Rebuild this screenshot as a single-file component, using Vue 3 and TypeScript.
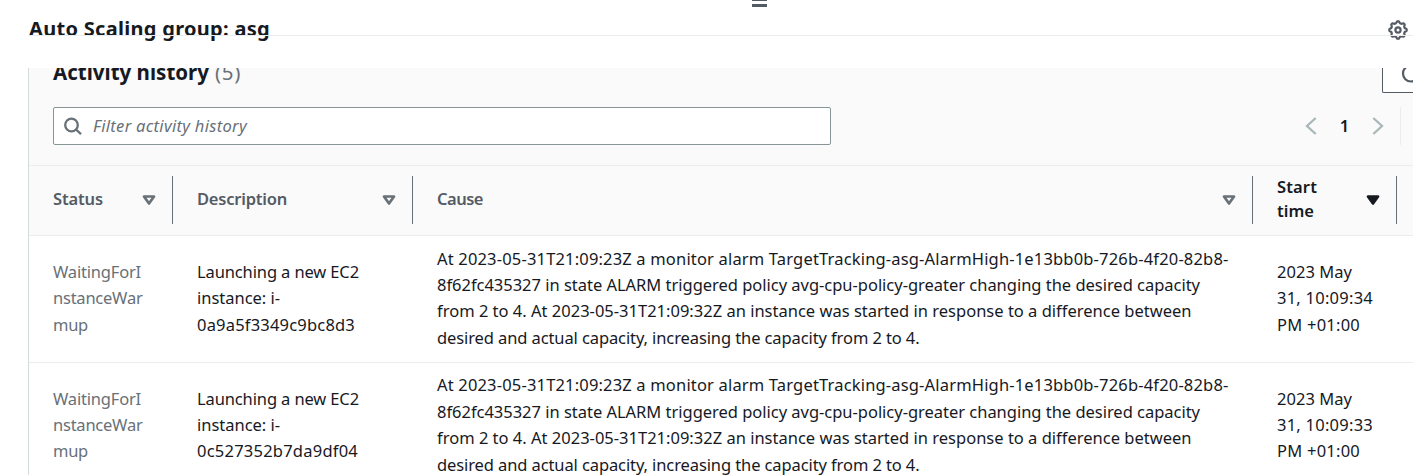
<script setup lang="ts">
import { type Directive } from 'vue'

type Line = [text: string, width: number]
interface Activity { status: Line[]; description: Line[]; cause: Line[]; start: Line[] }

// Spreads a line's letters so that it takes exactly the given width.
const vFit: Directive<HTMLElement, number> = {
  mounted(el, { value }) {
    const natural = el.getBoundingClientRect().width
    const count = el.textContent?.length ?? 1
    el.style.letterSpacing = `${(value - natural) / count}px`
  },
}

const status: Line[] = [['WaitingForI', 88], ['nstanceWar', 89.5], ['mup', 35]]
const cause: Line[] = [
  ['At 2023-05-31T21:09:23Z a monitor alarm TargetTracking-asg-AlarmHigh-1e13bb0b-726b-4f20-82b8-', 791.5],
  ['8f62fc435327 in state ALARM triggered policy avg-cpu-policy-greater changing the desired capacity', 763],
  ['from 2 to 4. At 2023-05-31T21:09:32Z an instance was started in response to a difference between', 754.5],
  ['desired and actual capacity, increasing the capacity from 2 to 4.', 482.5],
]
const activities: Activity[] = [
  {
    status, cause,
    description: [['Launching a new EC2', 162], ['instance: i-', 83], ['0a9a5f3349c9bc8d3', 158]],
    start: [['2023 May', 75], ['31, 10:09:34', 96], ['PM +01:00', 83]],
  },
  {
    status, cause,
    description: [['Launching a new EC2', 162], ['instance: i-', 83], ['0c527352b7da9df04', 161]],
    start: [['2023 May', 75], ['31, 10:09:33', 96], ['PM +01:00', 83]],
  },
]
const columns: { key: keyof Activity; lines: Line[]; sorted?: boolean }[] = [
  { key: 'status', lines: [['Status', 50]] },
  { key: 'description', lines: [['Description', 90]] },
  { key: 'cause', lines: [['Cause', 46]] },
  { key: 'start', lines: [['Start', 40], ['time', 37]], sorted: true },
]

// Outline of the settings cog: a ring whose radius steps between eight teeth and gaps.
const cog = Array.from({ length: 32 }, (_, i) => {
  const angle = ((i - 0.5) * Math.PI) / 16
  const radius = i % 4 < 2 ? 8.7 : 7
  return `${(10 + radius * Math.sin(angle)).toFixed(2)},${(10 - radius * Math.cos(angle)).toFixed(2)}`
}).join(' ')
</script>

<template>
  <div class="page">
    <header class="split-header">
      <div class="handle"><i></i><i></i></div>
      <h2><span v-fit="241">Auto Scaling group: asg</span></h2>
      <svg class="gear" viewBox="0 0 20 20" width="20" height="20">
        <polygon :points="cog" />
        <circle cx="10" cy="10" r="2.6" />
      </svg>
    </header>
    <main class="body">
      <section class="panel">
        <div class="tools">
          <div class="heading">
            <h3><span v-fit="156">Activity history</span></h3>
            <span class="count"><span v-fit="26">(5)</span></span>
            <div class="refresh">
              <svg viewBox="0 0 20 20" width="20" height="20"><path d="M10 1.5a8 8 0 1 0 8 8" /></svg>
            </div>
          </div>
          <div class="controls">
            <div class="filter">
              <svg class="search" viewBox="0 0 20 20" width="20" height="20"><circle cx="8.5" cy="9" r="6.3" /><path d="M13 13.500l5 4.600" /></svg>
              <span v-fit="154">Filter activity history</span>
            </div>
            <div class="pager">
              <svg viewBox="0 0 12 18" width="12" height="18"><path d="M10.700 1L2 9l8.700 8" /></svg>
              <b>1</b>
              <svg viewBox="0 0 12 18" width="12" height="18"><path d="M1.300 1L10 9l-8.700 8" /></svg>
            </div>
          </div>
        </div>
        <div class="row head">
          <div v-for="c in columns" :key="c.key" class="cell" :class="{ sorted: c.sorted }">
            <div class="label"><div v-for="[t, w] in c.lines" :key="t"><span v-fit="w">{{ t }}</span></div></div>
            <svg class="sort" viewBox="0 0 14 12" width="14" height="12"><path d="M2 2.500h10L7 9.500z" /></svg>
          </div>
        </div>
        <div v-for="(a, i) in activities" :key="i" class="row data">
          <div v-for="c in columns" :key="c.key" class="cell" :class="c.key">
            <div v-for="[t, w] in a[c.key]" :key="t" class="line"><span v-fit="w">{{ t }}</span></div>
          </div>
        </div>
      </section>
    </main>
  </div>
</template>

<style>
html, body { margin: 0; overflow: hidden; background: #fff; }
</style>
<style scoped>
* { box-sizing: border-box; }
.page { width: 1413px; height: 475px; overflow: hidden; background: #fff; color: #16191f; font: 16.5px/26.4px "Noto Sans", sans-serif; }
span { white-space: pre; }
h2, h3 { margin: 0; font-weight: 700; }
.split-header { position: relative; height: 68px; padding: 15px 5px 0 29px; display: flex; justify-content: space-between; align-items: flex-start; }
.split-header::after { content: ""; position: absolute; left: 29px; right: 0; top: 35px; height: 1px; background: #eaeded; }
h2 { font-size: 20px; line-height: 28px; font-weight: 700; }
.gear { margin-top: 5px; fill: none; stroke: #545b64; stroke-width: 2.2; stroke-linejoin: round; }
.handle { position: absolute; left: 752px; top: -1px; display: grid; gap: 3px; }
.handle i { width: 15px; height: 2px; background: #545b64; }
.handle i + i { height: 3px; }
.body { height: 407px; overflow: hidden; padding-left: 28px; }
.panel { width: 1385px; border-left: 1px solid #d5dbdb; }
.tools { height: 97px; background: #fafafa; padding-left: 24px; }
.heading { height: 39px; display: flex; align-items: flex-start; }
h3 { font-size: 20.5px; line-height: 30px; margin-top: -11px; width: 162px; }
.count { font-size: 20.5px; line-height: 30px; margin-top: -11px; color: #687078; }
.refresh { margin: -13px 0 0 auto; width: 31px; height: 38px; flex: none; border: 1px solid #545b64; border-right: 0; border-radius: 2px 0 0 2px; background: #fff; padding: 8px 0 0 18px; overflow: hidden; }
.refresh svg { fill: none; stroke: #545b64; stroke-width: 2.2; display: block; }
.controls { display: flex; justify-content: space-between; }
.filter { width: 778px; height: 38px; border: 1px solid #879596; border-radius: 2px; background: #fff; color: #687078; font-style: italic; display: flex; align-items: center; padding-left: 9px; gap: 10px; }
.search { fill: none; stroke: #687078; stroke-width: 2.3; }
.pager { height: 38px; width: 96px; margin-right: 12px; border-right: 1px solid #eaeded; display: flex; align-items: center; }
.pager svg { fill: none; stroke: #aab7b8; stroke-width: 2.3; }
.pager b { width: 55px; text-align: center; font-weight: 600; }
.row { display: grid; grid-template-columns: 144px 240px 840px 144px 1fr; }
.head { height: 71px; border-top: 1px solid #eaeded; border-bottom: 1px solid #eaeded; background: #fafafa; color: #545b64; font-weight: 600; line-height: 24px; }
.head .cell { height: 48px; margin-top: 10px; padding: 0 16px 0 24px; border-right: 1px solid #687078; display: flex; align-items: center; justify-content: space-between; }
.head .label { margin-top: -2px; }
.head .cell.sorted { color: #16191f; }
.sort { fill: none; stroke: #687078; stroke-width: 2.7; stroke-linejoin: round; }
.sorted .sort { fill: #16191f; stroke: #16191f; }
.data { height: 126.8px; padding-bottom: 0.9px; border-bottom: 1px solid #eaeded; align-items: center; }
.data .cell { padding-left: 24px; }
.data .status { color: #687078; }
.line { height: 26.4px; }
</style>
